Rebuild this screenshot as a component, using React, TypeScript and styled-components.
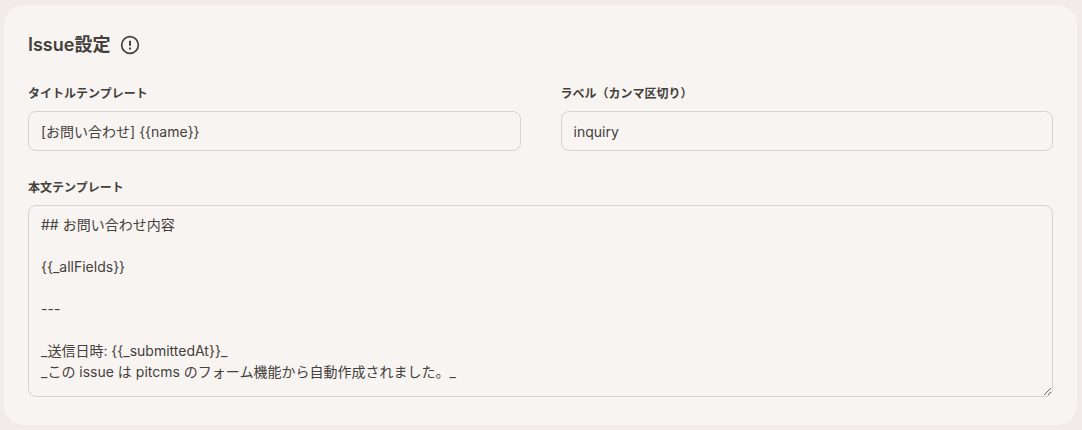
import React from "react";
import styled, { createGlobalStyle } from "styled-components";

const GlobalStyle = createGlobalStyle`
  *, *::before, *::after { box-sizing: border-box; }
  body {
    margin: 0;
    background: #f1ece9;
    color: #44403c;
    font-family: Inter, "Noto Sans CJK JP", sans-serif;
    font-size: 14px;
    line-height: 21px;
    -webkit-font-smoothing: antialiased;
  }
`;

const Page = styled.main`
  padding: 5px 5px 5px 4px;
`;

const Card = styled.section`
  display: flex;
  flex-direction: column;
  gap: 24px;
  padding: 24px 24px 28px;
  border-radius: 20px;
  background: #f8f4f1;
`;

const Header = styled.header`
  display: flex;
  align-items: center;
  gap: 10px;
  height: 32px;
`;

const Title = styled.h2`
  margin: 0;
  font-size: 18px;
  line-height: 32px;
  font-weight: 600;
`;

const InfoButton = styled.button`
  display: flex;
  padding: 0;
  border: 0;
  background: none;
  color: inherit;
  cursor: pointer;
`;

const Form = styled.form`
  display: grid;
  grid-template-columns: 1fr 1fr;
  gap: 28px 40px;
`;

const Field = styled.div<{ $wide?: boolean }>`
  display: flex;
  flex-direction: column;
  gap: 8px;
  min-width: 0;
  grid-column: ${({ $wide }) => ($wide ? "1 / -1" : "auto")};
`;

const Label = styled.label`
  font-size: 12px;
  line-height: 18px;
  font-weight: 600;
`;

const TextInput = styled.input`
  width: 100%;
  height: 40px;
  padding: 0 12px;
  border: 1px solid #d6d3d1;
  border-radius: 8px;
  background: transparent;
  color: inherit;
  font: inherit;
`;

const TextArea = styled.textarea`
  display: block;
  width: 100%;
  height: 192px;
  padding: 8px 12px;
  border: 1px solid #d6d3d1;
  border-radius: 8px;
  background: transparent;
  color: inherit;
  font: inherit;
  resize: vertical;
`;

const bodyTemplate = `## お問い合わせ内容

{{_allFields}}

---

_送信日時: {{_submittedAt}}_
_この issue は pitcms のフォーム機能から自動作成されました。_`;

function AlertIcon() {
  return (
    <svg width="20" height="20" viewBox="0 0 24 24" fill="none" stroke="currentColor" strokeWidth="2" aria-hidden="true">
      <circle cx="12" cy="12" r="10" />
      <path d="M12 7v6" strokeWidth="2.4" />
      <path d="M12 15v2.4" strokeWidth="2.4" />
    </svg>
  );
}

export default function App() {
  return (
    <>
      <GlobalStyle />
      <Page>
        <Card aria-labelledby="issue-settings">
          <Header>
            <Title id="issue-settings">Issue設定</Title>
            <InfoButton type="button" aria-labelledby="issue-settings">
              <AlertIcon />
            </InfoButton>
          </Header>
          <Form>
            <Field>
              <Label htmlFor="title-template">タイトルテンプレート</Label>
              <TextInput id="title-template" defaultValue="[お問い合わせ] {{name}}" />
            </Field>
            <Field>
              <Label htmlFor="labels">ラベル（カンマ区切り）</Label>
              <TextInput id="labels" defaultValue="inquiry" />
            </Field>
            <Field $wide>
              <Label htmlFor="body-template">本文テンプレート</Label>
              <TextArea id="body-template" defaultValue={bodyTemplate} spellCheck={false} />
            </Field>
          </Form>
        </Card>
      </Page>
    </>
  );
}
